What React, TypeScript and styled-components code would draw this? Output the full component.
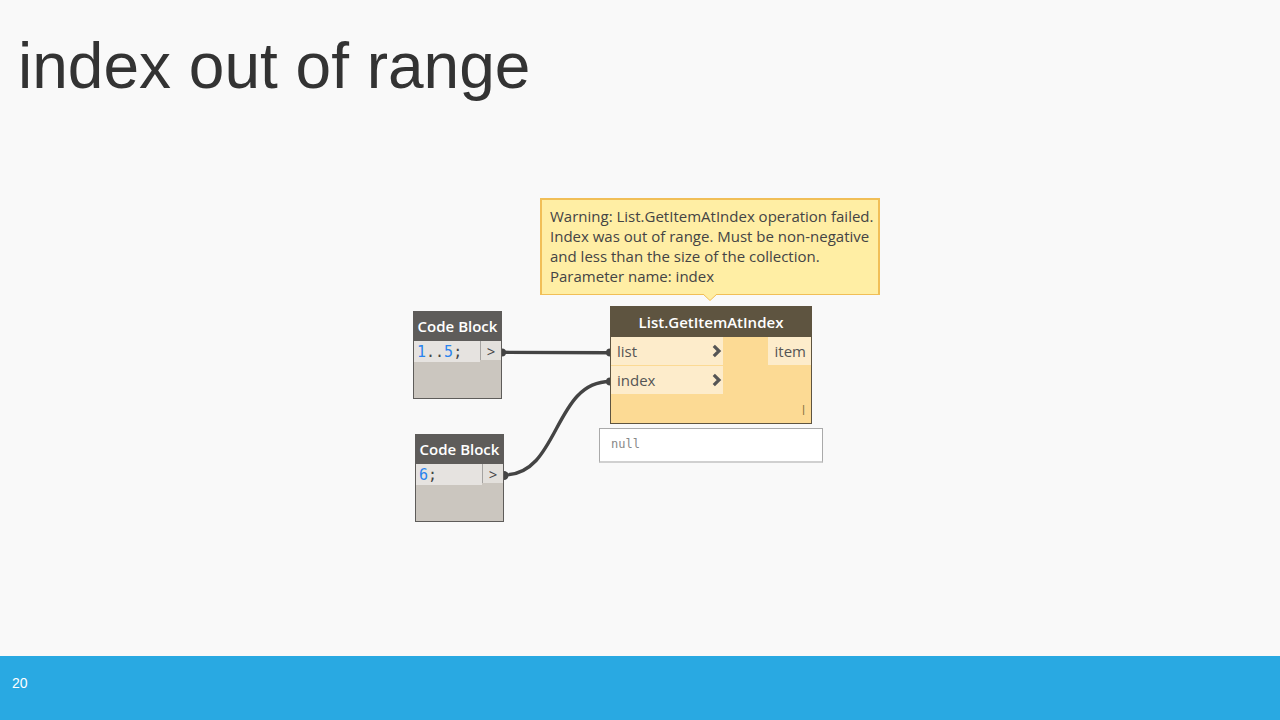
import React from "react";
import styled, { createGlobalStyle } from "styled-components";

const GlobalStyle = createGlobalStyle`
  *, *::before, *::after { box-sizing: border-box; }
  body { margin: 0; background: #f9f9f9; }
`;

const sans = `"Open Sans", "Noto Sans", sans-serif`;
const mono = `"DejaVu Sans Mono", monospace`;

const Slide = styled.div`
  display: flex;
  flex-direction: column;
  min-height: 100vh;
  background: #f9f9f9;
  font-family: ${sans};
`;

const Header = styled.header`
  padding: 28px 18px 0;
`;

const Title = styled.h1`
  margin: 0;
  font: 400 64px/76px "Liberation Sans", Arial, sans-serif;
  color: #333333;
`;

const Main = styled.main`
  flex: 1;
  display: flex;
  justify-content: center;
  padding: 86px 0 40px;
`;

const Graph = styled.div`
  position: relative;
  width: 480px;
  height: 340px;
`;

const Footer = styled.footer`
  height: 64px;
  padding: 18px 12px;
  background: #29a9e2;
  color: #ffffff;
  font: 400 14px/18px "Liberation Sans", Arial, sans-serif;
`;

const Wires = styled.svg`
  position: absolute;
  inset: 0;
  width: 100%;
  height: 100%;
`;

const Warning = styled.div`
  position: absolute;
  left: 140px;
  top: 8px;
  width: 340px;
  padding: 6px 8px 8px;
  border: 2px solid #f1bf57;
  border-bottom-width: 1px;
  background: #ffeea4;
  color: #444444;
  font-size: 15px;
  line-height: 20px;
  white-space: nowrap;
`;

const Pointer = styled.svg`
  position: absolute;
  left: 160px;
  bottom: -8px;
  width: 16px;
  height: 8px;
`;

const Node = styled.section<{ $x: number; $y: number; $w: number; $h: number; $warn?: boolean }>`
  position: absolute;
  left: ${(p) => p.$x}px;
  top: ${(p) => p.$y}px;
  width: ${(p) => p.$w}px;
  height: ${(p) => p.$h}px;
  display: flex;
  flex-direction: column;
  border: 1px solid ${(p) => (p.$warn ? "#5e5440" : "#5e5c5a")};
  background: ${(p) => (p.$warn ? "#fcda94" : "#cbc6bf")};
`;

const NodeTitle = styled.h2<{ $warn?: boolean }>`
  margin: 0;
  height: ${(p) => (p.$warn ? 30 : 29)}px;
  flex: none;
  background: ${(p) => (p.$warn ? "#5e5440" : "#5e5c5a")};
  color: #ffffff;
  font-size: 15px;
  font-weight: 600;
  line-height: ${(p) => (p.$warn ? 30 : 28)}px;
  text-align: center;
  white-space: nowrap;
`;

const CodeRow = styled.div`
  display: flex;
  align-items: flex-start;
`;

const Code = styled.code`
  flex: 1;
  height: 21px;
  padding-left: 3px;
  background: #e6e3e0;
  color: #444444;
  font: 400 15px/22px ${mono};
`;

const Num = styled.span`
  color: #2a84ee;
`;

const OutPort = styled.button`
  width: 21px;
  height: 19px;
  padding: 0;
  border: 0;
  border-left: 1px solid #a5a3a1;
  background: #e3e0dc;
  color: #444444;
  font: 400 15px/20px ${sans};
`;

const Ports = styled.div`
  display: flex;
  justify-content: space-between;
  align-items: flex-start;
`;

const Inputs = styled.div`
  display: flex;
  flex-direction: column;
  gap: 1px;
  width: 112px;
`;

const Port = styled.div`
  display: flex;
  align-items: center;
  justify-content: space-between;
  height: 28px;
  padding: 0 1px 0 6px;
  background: #fdeccb;
  color: #555555;
  font-size: 15px;
  line-height: 28px;
`;

const ItemPort = styled(Port)`
  padding: 0 5px 0 7px;
`;

const Lacing = styled.div`
  margin-top: auto;
  padding: 0 6px 3px;
  color: #8a7444;
  font-size: 12px;
  line-height: 18px;
  text-align: right;
`;

const Preview = styled.output`
  position: absolute;
  left: 199px;
  top: 238px;
  width: 224px;
  height: 35px;
  padding: 5px 11px;
  border: 1px solid #aaaaaa;
  border-bottom: 2px solid #d0d0d0;
  background: #ffffff;
  color: #888888;
  font: 400 12px/20px ${mono};
`;

const Chevron = () => (
  <svg width="10" height="14" viewBox="0 0 10 14" aria-hidden="true">
    <path d="M1.8 1.8 L7 7 L1.8 12.2" fill="none" stroke="#555555" strokeWidth="3.2" />
  </svg>
);

const CodeBlock = ({ x, y, children }: { x: number; y: number; children: React.ReactNode }) => (
  <Node $x={x} $y={y} $w={89} $h={88}>
    <NodeTitle>Code Block</NodeTitle>
    <CodeRow>
      <Code>{children}</Code>
      <OutPort type="button">&gt;</OutPort>
    </CodeRow>
  </Node>
);

export default function App() {
  return (
    <Slide>
      <GlobalStyle />
      <Header>
        <Title>index out of range</Title>
      </Header>
      <Main>
        <Graph>
          <Wires viewBox="0 0 480 340" aria-hidden="true">
            <g fill="none" stroke="#444444" strokeWidth="3.4">
              <path d="M102 162.3 L210 162.8" />
              <path d="M104 285 C160 285 153 191.5 210 191.5" />
            </g>
            <g fill="#444444">
              <circle cx="102" cy="162.5" r="4" />
              <circle cx="104" cy="285.5" r="4.5" />
              <circle cx="210" cy="162.5" r="4" />
              <circle cx="210" cy="191.5" r="4" />
            </g>
          </Wires>

          <CodeBlock x={13} y={121}>
            <Num>1</Num>..<Num>5</Num>;
          </CodeBlock>
          <CodeBlock x={15} y={244}>
            <Num>6</Num>;
          </CodeBlock>

          <Node $x={210} $y={116} $w={202} $h={118} $warn>
            <NodeTitle $warn>List.GetItemAtIndex</NodeTitle>
            <Ports>
              <Inputs>
                <Port>list <Chevron /></Port>
                <Port>index <Chevron /></Port>
              </Inputs>
              <ItemPort>item</ItemPort>
            </Ports>
            <Lacing>l</Lacing>
          </Node>

          <Preview>null</Preview>

          <Warning role="alert">
            Warning: List.GetItemAtIndex operation failed.
            <br />
            Index was out of range. Must be non-negative
            <br />
            and less than the size of the collection.
            <br />
            Parameter name: index
            <Pointer viewBox="0 0 16 8" aria-hidden="true">
              <path d="M1 0 L8 6.5 L15 0" fill="#ffeea4" stroke="#f1bf57" />
            </Pointer>
          </Warning>
        </Graph>
      </Main>
      <Footer>20</Footer>
    </Slide>
  );
}
